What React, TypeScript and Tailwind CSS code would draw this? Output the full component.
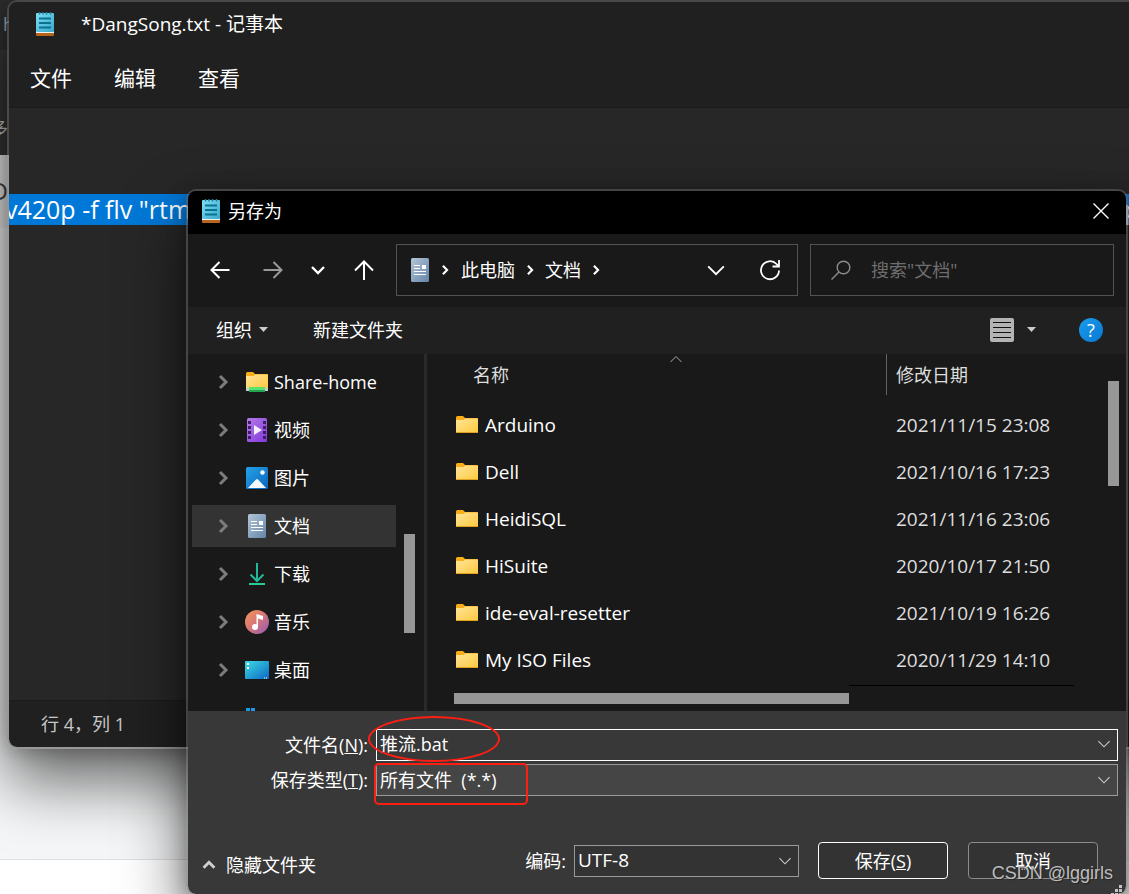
import { useState } from 'react';
import type { ReactNode } from 'react';

const FONT = 'font-["Open_Sans","Noto_Sans_CJK_SC",sans-serif]';

interface SidebarItem {
  label: string;
  icon: ReactNode;
}

function Chevron({ className, d, width = 2 }: { className: string; d: string; width?: number }) {
  return (
    <svg className={className} viewBox="0 0 20 20" fill="none" stroke="currentColor" strokeWidth={width}>
      <path d={d} />
    </svg>
  );
}

function NotepadIcon() {
  return (
    <svg className="w-[18px] h-6 shrink-0" viewBox="0 0 18 24">
      <defs>
        <linearGradient id="pad" x1="0" y1="0" x2="1" y2="1">
          <stop offset="0" stopColor="#7fdcf2" />
          <stop offset="1" stopColor="#37a9cc" />
        </linearGradient>
      </defs>
      <rect y="20" width="18" height="4" rx="1" fill="#b5651d" />
      <rect y="19" width="18" height="2" fill="#f3f3f3" />
      <rect y="1" width="18" height="19" rx="1" fill="url(#pad)" />
      <path d="M3.500 0v2.500M7 0v2.500M10.500 0v2.500M14.500 0v2.500" stroke="#1d7f9e" strokeWidth="1.500" />
      <path d="M3 6.500h12M3 11h12M3 15.500h12" stroke="#0b7391" strokeWidth="1.800" />
    </svg>
  );
}

function DocumentIcon() {
  return (
    <svg className="w-[18px] h-6 shrink-0" viewBox="0 0 18 24">
      <defs>
        <linearGradient id="doc" x1="0" y1="0" x2="1" y2="1">
          <stop offset="0" stopColor="#b4c6d9" />
          <stop offset="1" stopColor="#6485a8" />
        </linearGradient>
      </defs>
      <rect width="18" height="24" rx="1.500" fill="url(#doc)" />
      <path d="M3 7.500h6M3 10.500h6M3 13.500h12M3 16.500h12" stroke="#fff" />
      <rect x="11" y="7" width="4" height="4" fill="#fff" />
    </svg>
  );
}

function FolderIcon({ shared = false }: { shared?: boolean }) {
  return (
    <svg className="w-[22px] h-5 shrink-0" viewBox="0 0 22 20">
      <defs>
        <linearGradient id="folder" x1="0" y1="0" x2="1" y2="1">
          <stop offset="0" stopColor="#ffe49a" />
          <stop offset="1" stopColor="#ffc93c" />
        </linearGradient>
      </defs>
      <path d="M0 1.500Q0 0 1.500 0H7l2 2h12q1 0 1 1v3H0z" fill="#f9ad16" />
      <path d="M0 4h7.500l1.500-1.500H22V17H0z" fill="url(#folder)" />
      <path d="M0 16.500h22" stroke="#e0a21c" />
      {shared && (
        <>
          <rect y="16" width="22" height="3" fill="#c9cdcf" />
          <rect x="3" y="15" width="16" height="5" fill="#23a455" />
          <rect x="3" y="15" width="16" height="3" fill="#5be36e" />
        </>
      )}
    </svg>
  );
}

function VideoIcon() {
  return (
    <svg className="w-5 h-6" viewBox="0 0 20 24">
      <defs>
        <linearGradient id="video" x1="0" y1="0" x2="1" y2="1">
          <stop offset="0" stopColor="#b57bea" />
          <stop offset="1" stopColor="#8238db" />
        </linearGradient>
      </defs>
      <rect width="20" height="24" rx="1.500" fill="url(#video)" />
      <path d="M2.500 3v19M17.500 3v19" stroke="#3c2067" strokeWidth="3" strokeDasharray="3 2" />
      <path d="M7 7l8 5-8 5z" fill="#f4effa" />
    </svg>
  );
}

function PictureIcon() {
  return (
    <svg className="w-[22px] h-[22px]" viewBox="0 0 22 22">
      <defs>
        <linearGradient id="picture" x1="0" y1="0" x2="1" y2="1">
          <stop offset="0" stopColor="#23a3e8" />
          <stop offset="1" stopColor="#0b64bd" />
        </linearGradient>
      </defs>
      <rect width="22" height="22" rx="1.500" fill="url(#picture)" />
      <path d="M2 21l8-8.500q1-1 2 0L20 21z" fill="#f5faff" />
      <circle cx="16.500" cy="5.500" r="2.200" fill="#fff" />
    </svg>
  );
}

function DownloadIcon() {
  return (
    <svg className="w-4 h-[22px]" viewBox="0 0 16 22" fill="none" strokeWidth="2">
      <path d="M8 0v18M1.500 11.500L8 18l6.500-6.500" stroke="#22b898" />
      <path d="M0 21h16" stroke="#2ccb8e" />
    </svg>
  );
}

function MusicIcon() {
  return (
    <svg className="w-6 h-6" viewBox="0 0 24 24">
      <defs>
        <linearGradient id="music" x1="0" y1="0" x2="1" y2="1">
          <stop offset="0.100" stopColor="#f0905a" />
          <stop offset="0.500" stopColor="#d6757b" />
          <stop offset="1" stopColor="#8c58b8" />
        </linearGradient>
      </defs>
      <circle cx="12" cy="12" r="12" fill="url(#music)" />
      <circle cx="10" cy="17" r="3" fill="#fff" />
      <path d="M11.500 17V4l6.500 2v4l-5-1.500V17z" fill="#fff" />
    </svg>
  );
}

function DesktopIcon() {
  return (
    <svg className="w-6 h-[18px]" viewBox="0 0 24 18">
      <defs>
        <linearGradient id="desktop" x1="0" y1="0" x2="1" y2="1">
          <stop offset="0" stopColor="#3edbe6" />
          <stop offset="1" stopColor="#0c68c4" />
        </linearGradient>
      </defs>
      <rect width="24" height="18" rx="1" fill="url(#desktop)" />
      <path d="M2 2h2v2H2zM2 6h2v2H2zM19 16.500h1v1h-1zM21 16.500h1v1h-1z" fill="#fff" />
    </svg>
  );
}

function WindowsIcon() {
  return (
    <svg className="w-[22px] h-5" viewBox="0 0 22 20">
      <path d="M0 0h4v9H0zM5 0h4v9H5zM0 10h4v9H0zM5 10h4v9H5z" fill="#1c98e4" />
    </svg>
  );
}

const sidebarItems: SidebarItem[] = [
  { label: 'Share-home', icon: <FolderIcon shared /> },
  { label: '视频', icon: <VideoIcon /> },
  { label: '图片', icon: <PictureIcon /> },
  { label: '文档', icon: <DocumentIcon /> },
  { label: '下载', icon: <DownloadIcon /> },
  { label: '音乐', icon: <MusicIcon /> },
  { label: '桌面', icon: <DesktopIcon /> },
  { label: '', icon: <WindowsIcon /> },
];

const files = [
  { name: 'Arduino', date: '2021/11/15 23:08' },
  { name: 'Dell', date: '2021/10/16 17:23' },
  { name: 'HeidiSQL', date: '2021/11/16 23:06' },
  { name: 'HiSuite', date: '2020/10/17 21:50' },
  { name: 'ide-eval-resetter', date: '2021/10/19 16:26' },
  { name: 'My ISO Files', date: '2020/11/29 14:10' },
];

const RIGHT = 'M7 4l6 6-6 6';
const DOWN = 'M4 7l6 6 6-6';
const UP = 'M4 13l6-6 6 6';

function Desktop() {
  return (
    <div className="absolute inset-0 flex flex-col bg-white text-lg">
      <div className="h-[50px] bg-[#2d2d2d] pl-[3px] pt-3 leading-6 text-[#8aa4b8]">h</div>
      <div className="h-[105px] bg-[#363636] pt-[66px] leading-6 text-[#c8c8c8]">
        <span className="block w-2 overflow-hidden" dir="rtl">多</span>
      </div>
      <div className="h-[73px] bg-[#ececec] pt-5 text-2xl leading-8 text-[#444]">
        <span className="block w-2 overflow-hidden" dir="rtl">D</span>
      </div>
      <div className="flex-1 border-b border-[#dcdfe2] bg-[#f5f6f7]" />
      <div className="h-[34px] bg-white" />
    </div>
  );
}

function NotepadWindow() {
  return (
    <section className="absolute top-0 -right-10 bottom-[145px] left-[7px] flex flex-col overflow-hidden rounded-[10px] border-2 border-[#5a5a5a99] shadow-[0_32px_64px_rgba(0,0,0,0.600),0_2px_20px_rgba(0,0,0,0.250)]">
      <header className="flex h-[46px] shrink-0 items-center gap-[27px] bg-[#202020] pb-0.5 pl-[27px] text-[19px] text-white">
        <NotepadIcon />
        <h1>*DangSong.txt - 记事本</h1>
      </header>
      <nav className="flex h-[60px] shrink-0 items-center gap-[42px] border-b border-[#1b1b1b] bg-[#202020] pt-0.5 pl-[21px] text-[21px] text-white">
        <button type="button">文件</button>
        <button type="button">编辑</button>
        <button type="button">查看</button>
      </nav>
      <div className="flex-1 bg-[#272727] pt-[86px]">
        <p className="flex h-[31px] items-center justify-between overflow-hidden bg-[#0078d7] pr-7 text-[25px] whitespace-nowrap text-white">
          <span className="-ml-1">v420p -f flv "rtm</span>
          <span>p</span>
        </p>
      </div>
      <footer className="flex h-[47px] shrink-0 items-center border-t border-[#1b1b1b] bg-[#202020] pl-8 text-lg text-[#c8c8c8]">
        行 4，列 1
      </footer>
    </section>
  );
}

function NavigationBar() {
  return (
    <div className="flex h-[73px] shrink-0 items-center bg-[#191919] pr-3 pb-0.5 pl-[22px] text-lg text-white">
      <div className="flex w-[186px] shrink-0 items-center">
        <button type="button" aria-label="后退" className="mr-[33px]">
          <svg className="h-5 w-5" viewBox="0 0 20 20" fill="none" stroke="#fff" strokeWidth="2">
            <path d="M19.500 10H2M9.500 2L1.500 10l8 8" />
          </svg>
        </button>
        <button type="button" aria-label="前进" className="mr-[25px]">
          <svg className="h-5 w-5" viewBox="0 0 20 20" fill="none" stroke="#999" strokeWidth="2">
            <path d="M0.500 10H18M10.500 2l8 8-8 8" />
          </svg>
        </button>
        <button type="button" aria-label="最近位置" className="mr-[26px]">
          <Chevron className="h-5 w-5" d={DOWN} width={2.4} />
        </button>
        <button type="button" aria-label="上移">
          <svg className="h-5 w-5" viewBox="0 0 20 20" fill="none" stroke="#fff" strokeWidth="2">
            <path d="M10 20V2M1 10.500l9-9 9 9" />
          </svg>
        </button>
      </div>
      <div className="flex h-[52px] flex-1 items-center border border-[#535353] pr-4 pl-[14px]">
        <DocumentIcon />
        <Chevron className="mx-[9px] h-[14px] w-[14px]" d={RIGHT} width={3} />
        <button type="button">此电脑</button>
        <Chevron className="mx-2 h-[14px] w-[14px]" d={RIGHT} width={3} />
        <button type="button">文档</button>
        <Chevron className="mx-2 h-[14px] w-[14px]" d={RIGHT} width={3} />
        <button type="button" aria-label="展开" className="ml-auto">
          <Chevron className="h-6 w-6" d="M3.500 7l6.500 6.500L16.500 7" width={1.6} />
        </button>
        <button type="button" aria-label="刷新" className="ml-[31px]">
          <svg className="h-[22px] w-[22px]" viewBox="0 0 22 22" fill="none" stroke="#fff" strokeWidth="1.800">
            <path d="M20 11.500a9 9 0 1 1-2.500-6.500l2 2M20 1v6.500h-6.500" />
          </svg>
        </button>
      </div>
      <label className="ml-3 flex h-[52px] w-[304px] shrink-0 items-center gap-5 border border-[#535353] pl-5">
        <svg className="h-5 w-5 shrink-0" viewBox="0 0 20 20" fill="none" stroke="#8c8c8c" strokeWidth="1.400">
          <circle cx="12.500" cy="7.500" r="6.300" />
          <path d="M8 12L0.500 19.500" />
        </svg>
        <input
          type="search"
          aria-label="搜索"
          placeholder={'搜索"文档"'}
          className="w-full min-w-0 bg-transparent outline-none placeholder:text-[#6e6e6e]"
        />
      </label>
    </div>
  );
}

function CommandBar() {
  return (
    <div className="flex h-[47px] shrink-0 items-center bg-[#202020] pr-[23px] pb-0.5 pl-7 text-lg text-white">
      <button type="button" className="flex items-center gap-[7px]">
        组织
        <svg className="h-[5px] w-[9px]" viewBox="0 0 9 5" fill="#ccc">
          <path d="M0 0h9L4.500 5z" />
        </svg>
      </button>
      <button type="button" className="ml-[45px]">新建文件夹</button>
      <button type="button" aria-label="视图" className="ml-auto flex items-center gap-[13px]">
        <svg className="h-6 w-6" viewBox="0 0 24 24">
          <rect width="24" height="24" rx="2" fill="#b4b4b4" />
          <path d="M3 4.500h18M3 9.500h18M3 14.500h18M3 19.500h18" stroke="#111" />
        </svg>
        <svg className="h-[5px] w-[9px]" viewBox="0 0 9 5" fill="#ccc">
          <path d="M0 0h9L4.500 5z" />
        </svg>
      </button>
      <button
        type="button"
        aria-label="帮助"
        className="ml-[43px] flex h-6 w-6 items-center justify-center rounded-full bg-gradient-to-br from-[#1b9cea] to-[#0878d4] text-lg leading-6"
      >
        ?
      </button>
    </div>
  );
}

function Sidebar() {
  const [selected, setSelected] = useState('文档');

  return (
    <aside className="flex w-[239px] shrink-0 overflow-hidden border-r-[3px] border-[#2a2a2a]">
      <ul className="ml-1 flex w-[204px] shrink-0 flex-col gap-1.5 pt-[7px] text-lg text-white">
        {sidebarItems.map((item) => (
          <li key={item.label}>
            <button
              type="button"
              onClick={() => setSelected(item.label)}
              className={`flex h-[42px] w-full items-center pl-[21px] ${
                item.label === selected ? 'bg-[#333]' : ''
              }`}
            >
              {item.label ? (
                <Chevron className="h-5 w-5 shrink-0 text-[#7c7c7c]" d={RIGHT} width={3} />
              ) : (
                <span className="w-5" />
              )}
              <span className="mr-[5px] ml-3 flex w-6 shrink-0 justify-center">{item.icon}</span>
              {item.label}
            </button>
          </li>
        ))}
      </ul>
      <div className="ml-2 w-[11px] pt-[180px]">
        <div className="h-[99px] bg-[#979797]" />
      </div>
    </aside>
  );
}

function FileList() {
  return (
    <div className="flex min-w-0 flex-1">
      <div className="flex min-w-0 flex-1 flex-col">
        <table className="w-full table-fixed text-left">
          <thead>
            <tr className="h-12 align-top text-lg text-[#dedede]">
              <th scope="col" className="relative pl-[46px] font-normal leading-[43px]">
                名称
                <svg
                  className="absolute top-0.5 left-[243px] h-1.5 w-3"
                  viewBox="0 0 12 6"
                  fill="none"
                  stroke="#aaa"
                >
                  <path d="M0.500 6L6 0.500 11.500 6" />
                </svg>
              </th>
              <th scope="col" className="w-[213px] font-normal leading-[43px]">
                <div className="h-[41px] border-l border-[#636363] pl-[9px]">修改日期</div>
              </th>
            </tr>
          </thead>
          <tbody className="text-[19px]">
            {files.map((file) => (
              <tr key={file.name} className="h-[47px]">
                <td className="pl-[29px] text-white">
                  <div className="flex items-center gap-[7px]">
                    <FolderIcon />
                    {file.name}
                  </div>
                </td>
                <td className="pl-[10px] text-[#dedede]">{file.date}</td>
              </tr>
            ))}
          </tbody>
        </table>
        <div className="mt-auto mr-[25px] flex h-[26px] items-start">
          <div className="mt-2 ml-[27px] h-[11px] w-[395px] shrink-0 bg-[#979797]" />
          <div className="flex-1 border-t border-black" />
        </div>
      </div>
      <div className="w-[27px] shrink-0 pt-[27px] pr-[7px] pl-[9px]">
        <div className="h-[105px] bg-[#979797]" />
      </div>
    </div>
  );
}

function SaveForm() {
  const [fileName, setFileName] = useState('推流.bat');

  return (
    <form className="flex h-[183px] shrink-0 flex-col bg-[#383838] text-lg text-white" onSubmit={(e) => e.preventDefault()}>
      <div className="relative grid grid-cols-[180px_1fr] gap-x-2 gap-y-[3px] pt-[18px] pr-2">
        <label htmlFor="file-name" className="text-right leading-8">
          文件名(<u>N</u>):
        </label>
        <div className="flex h-8 items-center border border-white pr-1.5 pb-0.5">
          <input
            id="file-name"
            type="text"
            value={fileName}
            onChange={(e) => setFileName(e.target.value)}
            className="min-w-0 flex-1 bg-transparent pl-[3px] outline-none"
          />
          <Chevron className="h-[14px] w-[14px] text-[#ccc]" d="M2 6l8 8 8-8" width={1.6} />
        </div>
        <label htmlFor="file-type" className="text-right leading-8">
          保存类型(<u>T</u>):
        </label>
        <div className="grid h-8 items-center border border-[#999] bg-[#454545]">
          <select id="file-type" className="col-start-1 row-start-1 h-full w-full appearance-none bg-transparent pl-[3px] outline-none">
            <option>所有文件&nbsp; (*.*)</option>
          </select>
          <Chevron
            className="pointer-events-none col-start-1 row-start-1 mr-1.5 h-[14px] w-[14px] justify-self-end text-[#ccc]"
            d="M2 6l8 8 8-8"
            width={1.6}
          />
        </div>
        <div className="pointer-events-none absolute top-[5px] left-[180px] h-[46px] w-[132px] rounded-[50%] border-2 border-[#ff1f12]" />
        <div className="pointer-events-none absolute top-[52px] left-[186px] h-[42px] w-[154px] rounded-[5px] border-2 border-[#ff1f12]" />
      </div>
      <div className="mt-auto mb-[15px] flex h-[37px] items-center pr-7 pl-3">
        <button type="button" className="flex items-center gap-2 pt-2">
          <Chevron className="h-[18px] w-[18px] text-[#d0d0d0]" d={UP} width={3.2} />
          隐藏文件夹
        </button>
        <label htmlFor="encoding" className="mr-2 ml-auto">
          编码:
        </label>
        <div className="grid h-8 w-[225px] items-center border border-[#999] bg-[#333]">
          <select id="encoding" className="col-start-1 row-start-1 h-full w-full appearance-none bg-transparent pb-0.5 pl-[3px] text-[19px] outline-none">
            <option>UTF-8</option>
          </select>
          <Chevron
            className="pointer-events-none col-start-1 row-start-1 mr-1.5 h-[14px] w-[14px] justify-self-end text-[#ccc]"
            d="M2 6l8 8 8-8"
            width={1.6}
          />
        </div>
        <button type="submit" className="ml-[19px] h-[37px] w-[130px] rounded border border-white bg-[#333]">
          保存(<u>S</u>)
        </button>
        <button type="button" className="ml-5 h-[37px] w-[130px] rounded border border-[#8c8c8c] bg-[#333]">
          取消
        </button>
      </div>
    </form>
  );
}

function SaveAsDialog() {
  return (
    <section
      role="dialog"
      aria-label="另存为"
      className="absolute top-[189px] right-px -bottom-0.5 left-[186px] flex flex-col overflow-hidden rounded-[10px] border-2 border-[#5a5a5a99] shadow-[0_32px_64px_rgba(0,0,0,0.600),0_2px_20px_rgba(0,0,0,0.250)]"
    >
      <header className="flex h-[43px] shrink-0 items-center gap-2 bg-black pr-[17px] pb-[3px] pl-[14px] text-lg text-white">
        <NotepadIcon />
        <h2>另存为</h2>
        <button type="button" aria-label="关闭" className="ml-auto">
          <svg className="h-4 w-4" viewBox="0 0 16 16" stroke="#fff" strokeWidth="1.400">
            <path d="M0.500 0.500l15 15M15.500 0.500l-15 15" />
          </svg>
        </button>
      </header>
      <NavigationBar />
      <CommandBar />
      <div className="flex min-h-0 flex-1 overflow-hidden bg-[#191919]">
        <Sidebar />
        <FileList />
      </div>
      <SaveForm />
      <svg className="pointer-events-none absolute right-1 bottom-0 h-[9px] w-[11px]" viewBox="0 0 11 9" fill="#c4c4c4">
        <path d="M8 0h3v3H8zM4 4h3v3H4zM8 4h3v3H8zM0 8h3v1H0zM4 8h3v1H4zM8 8h3v1H8z" />
      </svg>
    </section>
  );
}

export default function App() {
  return (
    <main className={`relative h-screen min-h-[760px] overflow-hidden ${FONT}`}>
      <Desktop />
      <NotepadWindow />
      <SaveAsDialog />
      <p className="pointer-events-none absolute right-4 bottom-[7px] font-['Liberation_Sans',sans-serif] text-lg text-[#bdbdbd] [text-shadow:1px_1px_1px_#222]">
        CSDN @lggirls
      </p>
    </main>
  );
}
